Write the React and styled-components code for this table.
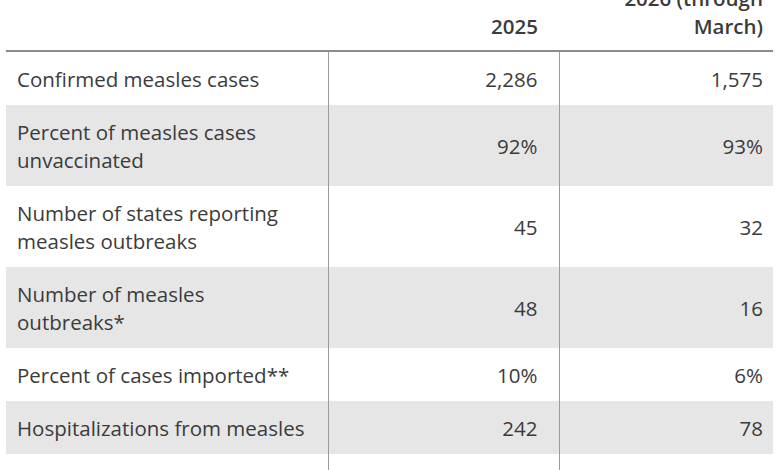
import styled, {createGlobalStyle} from 'styled-components';

const rows = [
  {label: ['Confirmed measles cases'], y2025: '2,286', y2026: '1,575'},
  {label: ['Percent of measles cases', 'unvaccinated'], y2025: '92%', y2026: '93%', shaded: true},
  {label: ['Number of states reporting', 'measles outbreaks'], y2025: '45', y2026: '32'},
  {label: ['Number of measles', 'outbreaks*'], y2025: '48', y2026: '16', shaded: true},
  {label: ['Percent of cases imported**'], y2025: '10%', y2026: '6%'},
  {label: ['Hospitalizations from measles'], y2025: '242', y2026: '78', shaded: true},
];

const App = () => {
  return (
    <>
      <GlobalStyle />
      <Page>
        <Table>
          <colgroup>
            <col style={{width: 322}} />
            <col style={{width: 231}} />
            <col style={{width: 214}} />
          </colgroup>
          <thead>
            <tr>
              <HeadCell></HeadCell>
              <HeadCell $pr={21}>2025</HeadCell>
              <HeadCell $pr={10}>2026 (through<br />March)</HeadCell>
            </tr>
          </thead>
          <tbody>
            {rows.map((r, i) => (
              <Row key={i} $shaded={r.shaded}>
                <LabelCell>
                  {r.label.map((l, j) => (
                    <span key={j}>{l}{j < r.label.length - 1 && <br />}</span>
                  ))}
                </LabelCell>
                <NumCell $pr={21} $line>{r.y2025}</NumCell>
                <NumCell $pr={10} $line>{r.y2026}</NumCell>
              </Row>
            ))}
            <Row>
              <Spacer></Spacer>
              <Spacer $line></Spacer>
              <Spacer $line></Spacer>
            </Row>
          </tbody>
        </Table>
      </Page>
    </>
  )
}


//Styled Components
const GlobalStyle = createGlobalStyle`
  html, body {
    margin: 0;
    padding: 0;
    background: #fff;
    overflow: hidden;
  }
`;
const Page = styled.div`
  width: 780px;
  height: 470px;
  overflow: hidden;
  padding: 0 6px;
  box-sizing: border-box;
  font-family: "Open Sans", Lato, sans-serif;
  color: #3b3b3b;
`;
const Table = styled.table`
  width: 767px;
  table-layout: fixed;
  border-collapse: collapse;
  margin-top: -16px;
  font-size: 20.5px;
  line-height: 28px;
`;
const HeadCell = styled.th`
  text-align: right;
  vertical-align: bottom;
  font-weight: 600;
  padding: 0 ${(p) => p.$pr || 0}px 10px 11px;
  border-bottom: 2px solid #8c8c8c;
  white-space: nowrap;
`;
const Row = styled.tr`
  background: ${(p) => (p.$shaded ? '#e6e6e6' : 'transparent')};
`;
const LabelCell = styled.td`
  padding: 13px 10px 12px 11px;
  white-space: nowrap;
  vertical-align: middle;
`;
const NumCell = styled.td`
  text-align: right;
  padding: 13px ${(p) => p.$pr}px 12px 0;
  border-left: ${(p) => (p.$line ? '1px solid #9a9a9a' : 'none')};
  vertical-align: middle;
`;
const Spacer = styled.td`
  height: 17px;
  padding: 0;
  border-left: ${(p) => (p.$line ? '1px solid #9a9a9a' : 'none')};
`;


export default App;
